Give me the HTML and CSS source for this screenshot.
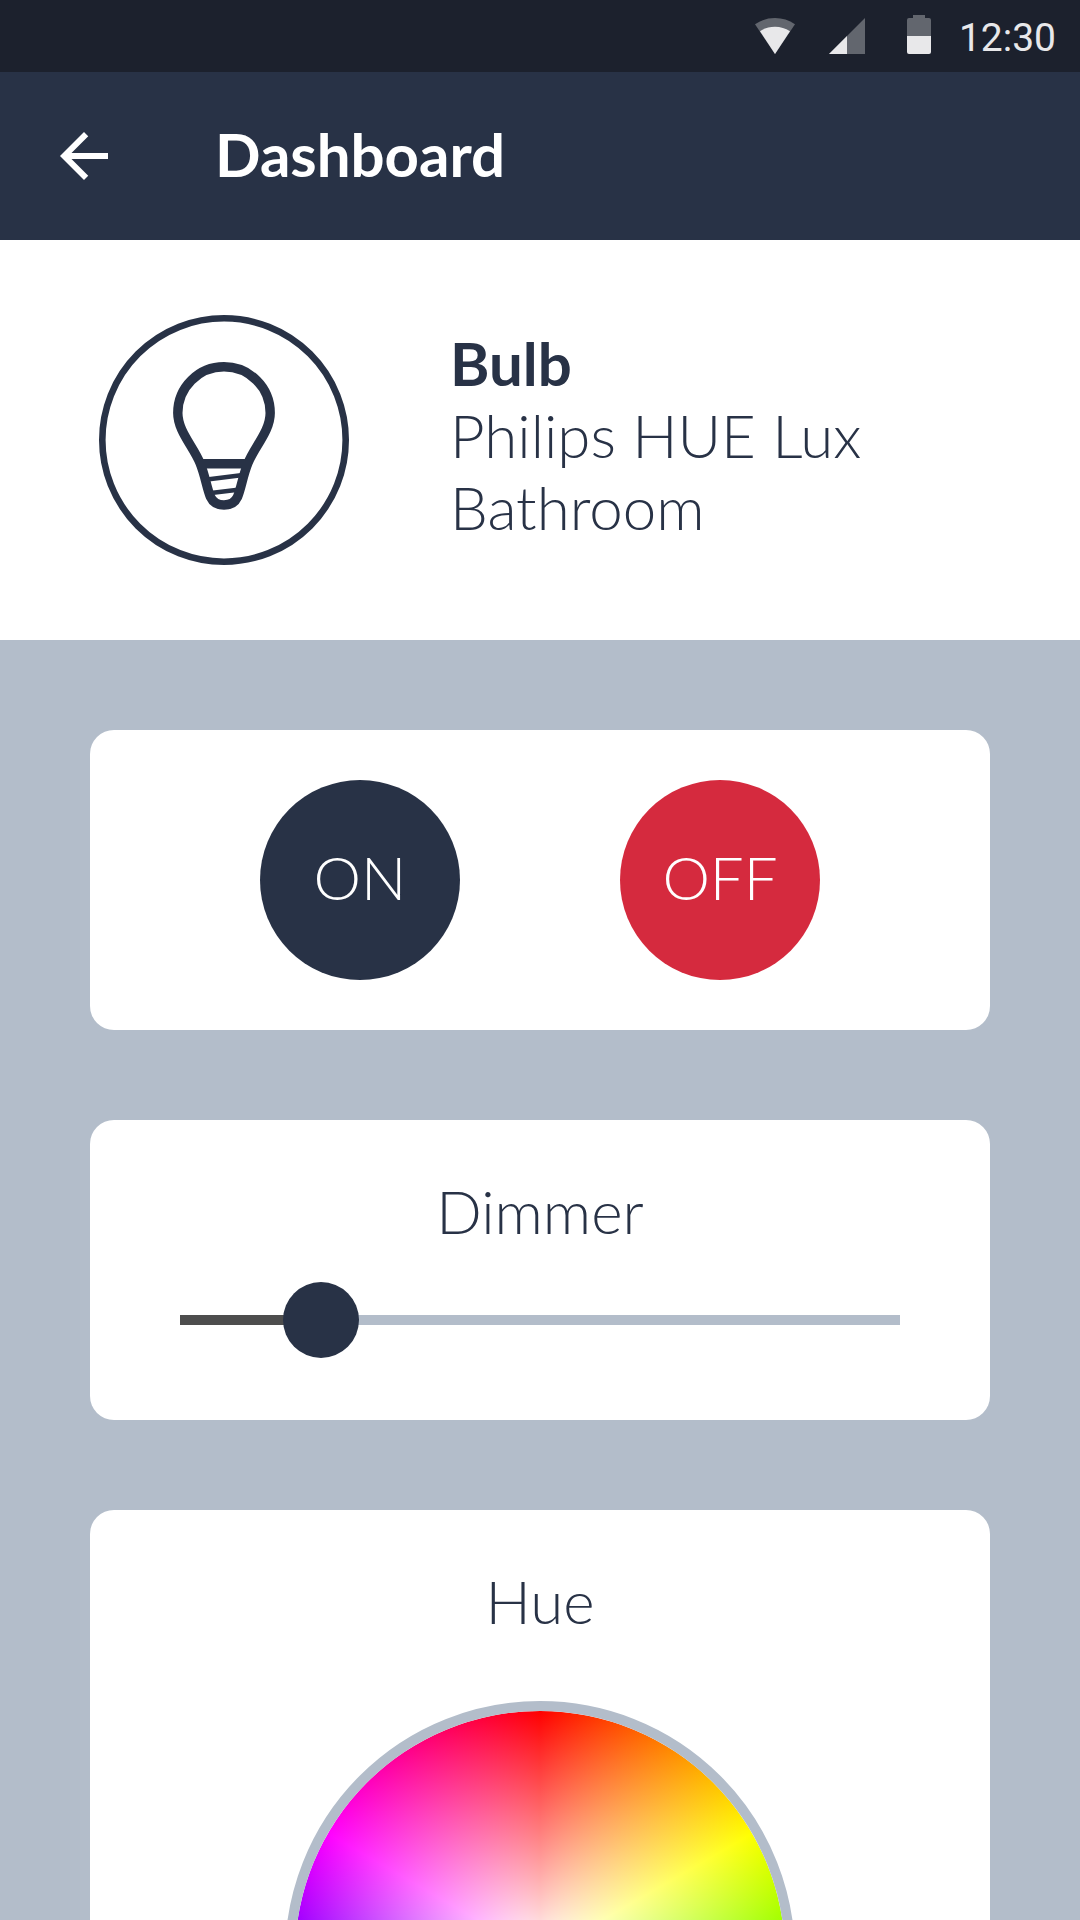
FILE: index.html
```html
<!DOCTYPE html>
<html lang="en">
<head>
<meta charset="utf-8">
<meta name="viewport" content="width=device-width, initial-scale=1">
<title>Dashboard</title>
<link rel="stylesheet" href="styles.css">
</head>
<body>
<div class="status-bar">
  <svg class="status-icon" viewBox="0 0 72 72" aria-hidden="true">
    <path class="icon-dim" d="M16 24.300A34.900 34.900 0 0 1 56 24.300L36 54Z"/>
    <path class="icon-lit" d="M21 31.300A27 27 0 0 1 51 31.300L36 54Z"/>
  </svg>
  <svg class="status-icon" viewBox="0 0 72 72" aria-hidden="true">
    <path class="icon-dim" d="M18 54L54 18V54Z"/>
    <path class="icon-lit" d="M18 54L36 36V54Z"/>
  </svg>
  <svg class="status-icon" viewBox="0 0 72 72" aria-hidden="true">
    <path class="icon-dim" d="M30 15H42V18H46A2 2 0 0 1 48 20V36H24V20A2 2 0 0 1 26 18H30Z"/>
    <path class="icon-lit" d="M24 36H48V52A2 2 0 0 1 46 54H26A2 2 0 0 1 24 52Z"/>
  </svg>
  <time class="clock">12:30</time>
</div>

<header class="app-bar">
  <a class="back" href="#" aria-label="Back">
    <svg class="back-icon" viewBox="0 0 24 24" aria-hidden="true">
      <path d="M20 11H7.830l5.590-5.590L12 4l-8 8 8 8 1.410-1.410L7.830 13H20z"/>
    </svg>
  </a>
  <h1 class="app-title">Dashboard</h1>
</header>

<main class="content">
  <section class="device">
    <svg class="device-icon" viewBox="0 0 250 250" aria-hidden="true">
      <circle cx="125" cy="125" r="121.700" stroke-width="6.600"/>
      <path stroke-width="9.400" d="M125 190C118 190 114 187.500 111.500 182C108 174 106 160 101 148C94 131 78.800 116 78.800 98A46.200 46.200 0 0 1 171.200 98C171.200 116 156 131 149 148C144 160 142 174 138.500 182C136 187.500 132 190 125 190Z"/>
      <path stroke-width="9.400" d="M102 148.700H148"/>
      <path stroke-width="4.400" d="M108 164.500L142 160.300M112 178L139 174.700"/>
    </svg>
    <div class="device-info">
      <h2 class="device-type">Bulb</h2>
      <p class="device-line">Philips HUE Lux</p>
      <p class="device-line">Bathroom</p>
    </div>
  </section>

  <div class="cards">
    <section class="card power">
      <button class="power-button power-on" type="button">ON</button>
      <button class="power-button power-off" type="button">OFF</button>
    </section>

    <section class="card">
      <label class="card-title" for="dimmer">Dimmer</label>
      <input class="slider" id="dimmer" type="range" min="0" max="100" value="16" style="--level: 0.16">
    </section>

    <section class="card">
      <h2 class="card-title">Hue</h2>
      <div class="wheel" role="img" aria-label="Hue wheel"></div>
    </section>
  </div>
</main>
</body>
</html>
```
FILE: styles.css
```css
:root {
  --navy: #283246;
  --mist: #b3bdca;
  --red: #d52a3e;
}

* {
  box-sizing: border-box;
}

body {
  display: flex;
  flex-direction: column;
  height: 100vh;
  margin: 0;
  background: var(--mist);
  color: var(--navy);
  font: 300 60px/72px Lato, "Liberation Sans", sans-serif;
}

h1, h2, p {
  margin: 0;
  font: inherit;
}

/* System status bar */
.status-bar {
  display: flex;
  flex: none;
  align-items: center;
  justify-content: flex-end;
  padding-right: 24px;
  background: #1c212d;
}

.status-icon {
  width: 72px;
  height: 72px;
}

.icon-dim {
  fill: #62666e;
}

.icon-lit {
  fill: #e8e8ea;
}

.clock {
  padding: 4px 0 0 4px;
  color: #e8e8ea;
  font: 400 39px/68px Roboto, sans-serif;
}

/* App bar */
.app-bar {
  display: flex;
  flex: none;
  align-items: center;
  gap: 95px;
  padding: 46px 48px;
  background: var(--navy);
  color: #fff;
}

.back,
.back-icon {
  display: block;
  width: 72px;
  height: 72px;
  color: inherit;
  fill: currentColor;
}

.app-title {
  padding-bottom: 4px;
  font-weight: 700;
}

.content {
  flex: 1;
  min-height: 0;
  overflow-y: auto;
  scrollbar-width: none;
}

/* Device summary */
.device {
  display: flex;
  align-items: center;
  gap: 101px;
  padding: 75px 99px;
  background: #fff;
}

.device-icon {
  flex: none;
  width: 250px;
  height: 250px;
  fill: none;
  stroke: var(--navy);
}

.device-info {
  padding-bottom: 10px;
}

.device-type {
  font-weight: 700;
}

/* Cards */
.cards {
  display: flex;
  flex-direction: column;
  gap: 90px;
  padding: 90px;
}

.card {
  display: flex;
  flex-direction: column;
  align-items: center;
  padding: 55px 90px 50px;
  border-radius: 24px;
  background: #fff;
}

.card-title {
  text-align: center;
}

.power {
  flex-direction: row;
  justify-content: center;
  gap: 160px;
  padding: 50px;
}

.power-button {
  width: 200px;
  height: 200px;
  padding: 0 0 6px;
  border: 0;
  border-radius: 50%;
  color: #fff;
  font: inherit;
}

.power-on {
  background: var(--navy);
}

.power-off {
  background: var(--red);
}

.slider {
  --thumb: 76px;
  width: 100%;
  height: var(--thumb);
  margin: 35px 0 12px;
  appearance: none;
  background: none;
}

.slider::-webkit-slider-runnable-track {
  height: 10px;
  background: linear-gradient(
    to right,
    #4d4d4d calc(var(--thumb) / 2 + (100% - var(--thumb)) * var(--level)),
    var(--mist) 0
  );
}

.slider::-webkit-slider-thumb {
  width: var(--thumb);
  height: var(--thumb);
  margin-top: -33px;
  appearance: none;
  border-radius: 50%;
  background: var(--navy);
}

.wheel {
  width: 510px;
  height: 510px;
  margin-top: 64px;
  border: 10px solid var(--mist);
  border-radius: 50%;
  background:
    radial-gradient(closest-side, #fff, #fff0) padding-box,
    conic-gradient(#f00, #ff0, #0f0, #0ff, #00f, #f0f, #f00) padding-box;
}
```
